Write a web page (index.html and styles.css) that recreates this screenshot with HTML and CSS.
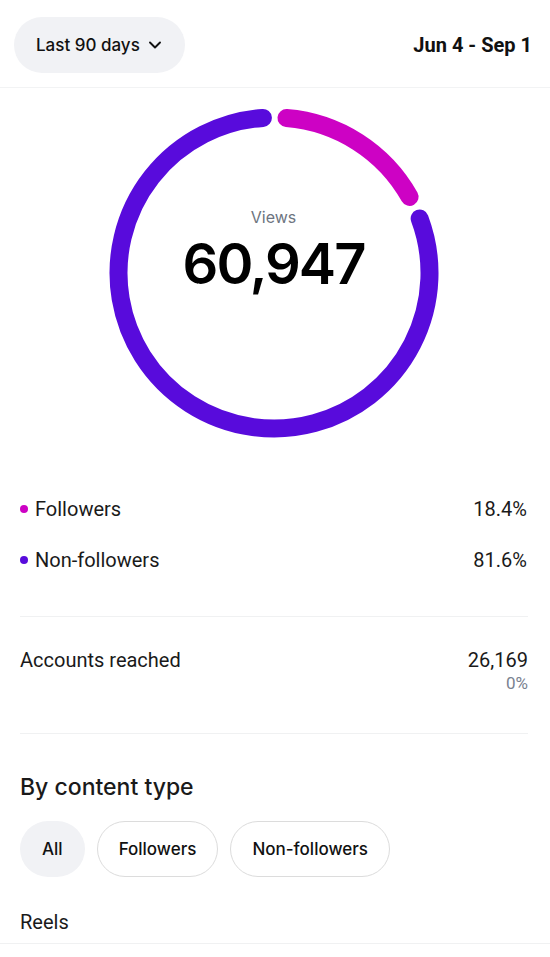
FILE: index.html
```html
<!DOCTYPE html>
<html lang="en">
<head>
    <meta charset="UTF-8">
    <meta name="viewport" content="width=device-width, initial-scale=1.0">
    <title>Views insights</title>
    <link rel="stylesheet" href="styles.css">
</head>
<body>
    <header class="top-bar">
        <button class="range-picker" type="button">
            <span>Last 90 days</span>
            <svg class="chevron" width="12" height="8" viewBox="0 0 12 8">
                <path d="M1 1.5 L6 6.5 L11 1.5" fill="none" stroke="#111" stroke-width="1.9" stroke-linecap="round" stroke-linejoin="round"/>
            </svg>
        </button>
        <div class="date-range">Jun 4 - Sep 1</div>
    </header>

    <section class="chart">
        <div class="donut">
            <svg width="330" height="330" viewBox="0 0 330 330">
                <path d="M177.47 10.0 A155.5 155.5 0 0 1 300.6 88.9" class="arc arc-followers"/>
                <path d="M310.66 110.54 A155.5 155.5 0 1 1 153.88 9.9" class="arc arc-others"/>
            </svg>
            <div class="donut-label">
                <div class="donut-title">Views</div>
                <div class="donut-value">60,947</div>
            </div>
        </div>
    </section>

    <ul class="legend">
        <li class="legend-row">
            <span class="legend-name"><span class="dot dot-followers"></span>Followers</span>
            <span>18.4%</span>
        </li>
        <li class="legend-row">
            <span class="legend-name"><span class="dot dot-others"></span>Non-followers</span>
            <span>81.6%</span>
        </li>
    </ul>

    <div class="stat">
        <span>Accounts reached</span>
        <div class="stat-value">
            <div>26,169</div>
            <div class="stat-change">0%</div>
        </div>
    </div>

    <section class="content-type">
        <h2>By content type</h2>
        <div class="chips">
            <button class="chip active" type="button">All</button>
            <button class="chip" type="button">Followers</button>
            <button class="chip" type="button">Non-followers</button>
        </div>
    </section>

    <div class="list-row">Reels</div>
</body>
</html>
```

FILE: styles.css
```css
body {
    margin: 0;
    font-family: Roboto, "Liberation Sans", sans-serif;
    color: #1a1a1a;
    background: #fff;
}
.top-bar {
    display: flex;
    justify-content: space-between;
    align-items: center;
    padding: 17px 18px 14px 14px;
    border-bottom: 1px solid #f2f3f4;
}
.range-picker {
    display: flex;
    align-items: center;
    height: 56px;
    padding: 0 24px 0 22px;
    border: none;
    border-radius: 28px;
    background: #f1f2f5;
    font-family: Inter, sans-serif;
    font-size: 17px;
    font-weight: 500;
    color: #111;
}
.chevron {
    margin-left: 9px;
}
.date-range {
    font-size: 20px;
    font-weight: 700;
    color: #111;
}
.chart {
    display: flex;
    justify-content: center;
    padding: 20px 3px 0 0;
}
.donut {
    position: relative;
    width: 330px;
    height: 330px;
}
.donut svg {
    display: block;
}
.arc {
    fill: none;
    stroke-width: 18;
    stroke-linecap: round;
}
.arc-followers {
    stroke: #cd02c4;
}
.arc-others {
    stroke: #580bdc;
}
.donut-label {
    position: absolute;
    top: 99px;
    left: 0;
    right: 0;
    text-align: center;
    font-family: Inter, sans-serif;
}
.donut-title {
    font-size: 16px;
    line-height: 20px;
    color: #6d7480;
}
.donut-value {
    margin-top: 7px;
    font-size: 56px;
    line-height: 60px;
    font-weight: 600;
    letter-spacing: -2px;
    color: #000;
}
.legend {
    list-style: none;
    margin: 59px 0 0;
    padding: 0 23px 0 20px;
    display: flex;
    flex-direction: column;
    gap: 27px;
}
.legend-row {
    display: flex;
    justify-content: space-between;
    font-size: 20px;
    line-height: 24px;
}
.legend-name {
    display: flex;
    align-items: center;
}
.dot {
    width: 8px;
    height: 8px;
    border-radius: 50%;
    margin-right: 7px;
}
.dot-followers {
    background: #cd02c4;
}
.dot-others {
    background: #580bdc;
}
.stat {
    display: flex;
    justify-content: space-between;
    margin: 44px 22px 0 20px;
    padding-top: 31px;
    border-top: 1px solid #f0f1f2;
    font-size: 20px;
    line-height: 24px;
}
.stat-value {
    text-align: right;
}
.stat-change {
    margin-top: 1px;
    font-size: 17px;
    line-height: 20px;
    color: #7a8290;
}
.content-type {
    margin: 40px 22px 0 20px;
    padding-top: 39px;
    border-top: 1px solid #f0f1f2;
}
.content-type h2 {
    margin: 0;
    font-family: Inter, sans-serif;
    font-size: 23px;
    line-height: 28px;
    font-weight: 500;
    color: #1a1a1a;
}
.chips {
    display: flex;
    gap: 12px;
    margin-top: 20px;
}
.chip {
    height: 56px;
    padding: 0 21px;
    border: 1.5px solid #dcdcdc;
    border-radius: 28px;
    background: #fff;
    font-family: Inter, sans-serif;
    font-size: 17px;
    font-weight: 500;
    color: #111;
}
.chip.active {
    border-color: transparent;
    background: #f1f2f5;
}
.list-row {
    margin-top: 33px;
    padding: 0 20px 9px;
    font-size: 20px;
    line-height: 24px;
    border-bottom: 1px solid #f0f1f2;
}
```
